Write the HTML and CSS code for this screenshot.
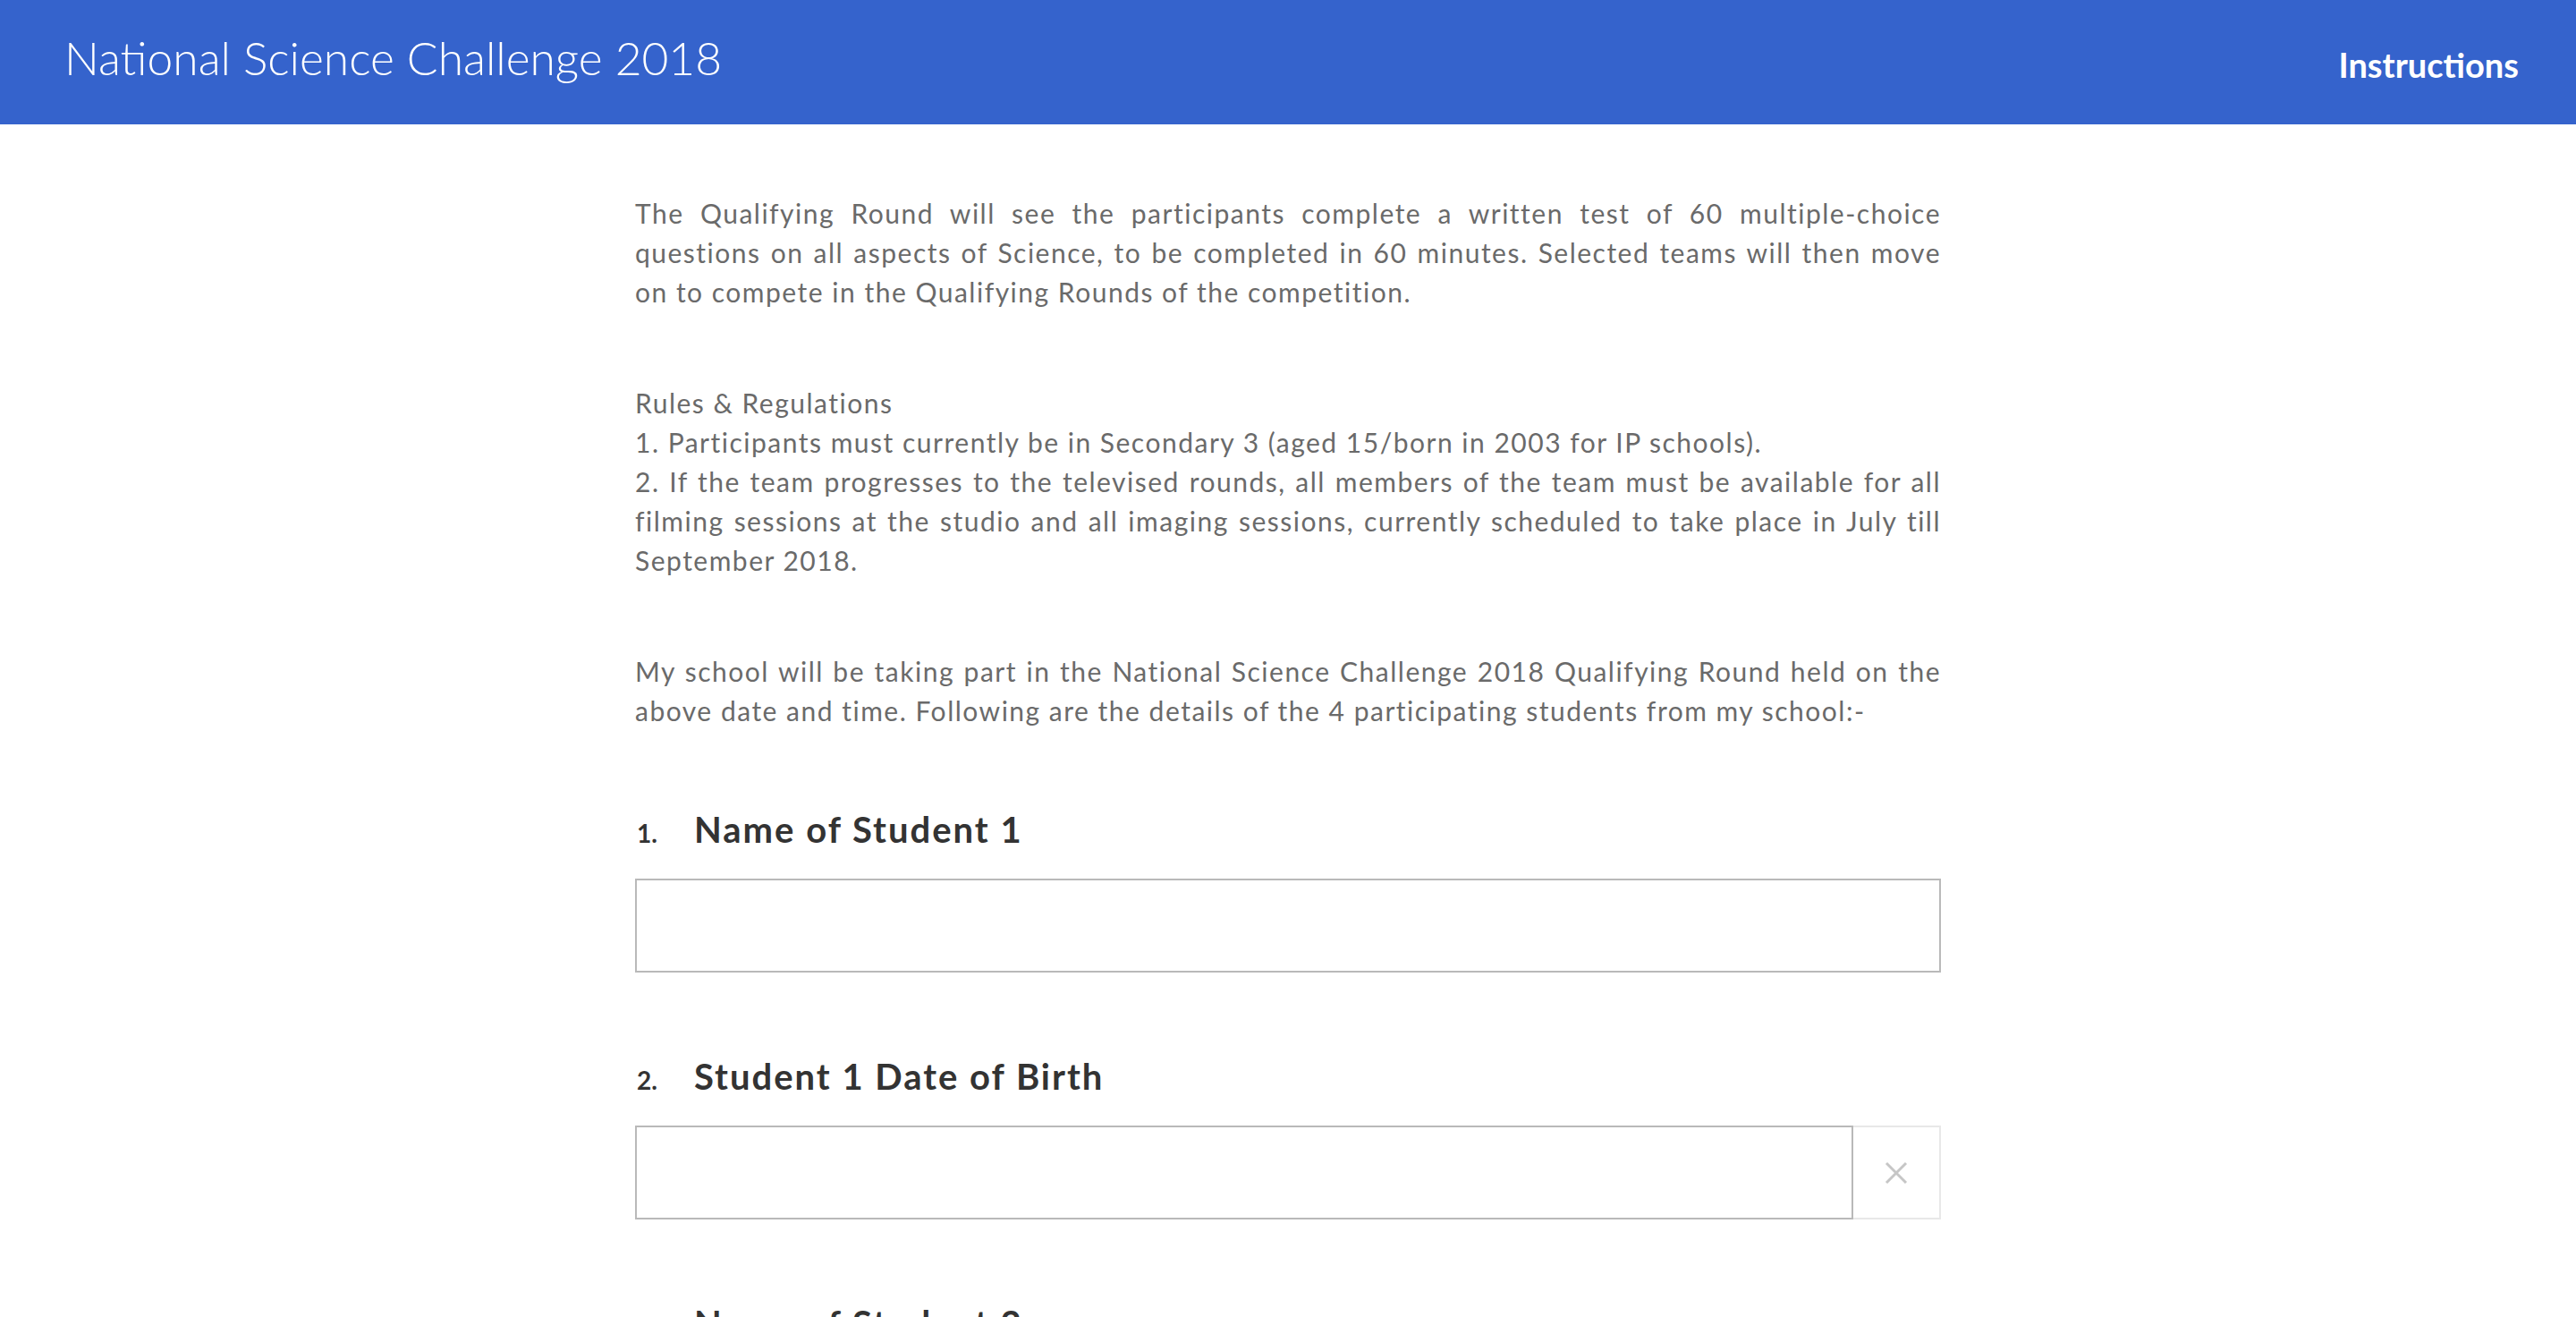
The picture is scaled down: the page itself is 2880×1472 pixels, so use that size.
FILE: index.html
```html
<!DOCTYPE html>
<html lang="en">
<head>
<meta charset="utf-8">
<title>National Science Challenge 2018</title>
<link rel="stylesheet" href="styles.css">
</head>
<body>
<header class="topbar">
  <div class="brand">National Science Challenge 2018</div>
  <a class="nav-link" href="#">Instructions</a>
</header>
<main class="content">
  <p class="intro">The Qualifying Round will see the participants complete a written test of 60 multiple-choice questions on all aspects of Science, to be completed in 60 minutes. Selected teams will then move on to compete in the Qualifying Rounds of the competition.</p>
  <p class="intro">Rules &amp; Regulations<br>1. Participants must currently be in Secondary 3 (aged 15/born in 2003 for IP schools).<br>2. If the team progresses to the televised rounds, all members of the team must be available for all filming sessions at the studio and all imaging sessions, currently scheduled to take place in July till September 2018.</p>
  <p class="intro">My school will be taking part in the National Science Challenge 2018 Qualifying Round held on the above date and time. Following are the details of the 4 participating students from my school:-</p>

  <section class="question">
    <h2 class="q-title"><span class="q-num">1.</span><span class="q-text">Name of Student 1</span></h2>
    <input class="field" type="text">
  </section>

  <section class="question">
    <h2 class="q-title"><span class="q-num">2.</span><span class="q-text">Student 1 Date of Birth</span></h2>
    <div class="date-group">
      <input class="field field-date" type="text">
      <button class="clear-btn" type="button" aria-label="Clear">
        <svg width="26" height="26" viewBox="0 0 26 26"><path d="M2 2 L24 24 M24 2 L2 24" stroke="#c6c6c6" stroke-width="3" fill="none"/></svg>
      </button>
    </div>
  </section>

  <section class="question">
    <h2 class="q-title"><span class="q-num">3.</span><span class="q-text">Name of Student 2</span></h2>
    <input class="field" type="text">
  </section>
</main>
</body>
</html>
```

FILE: styles.css
```css
html, body {
  margin: 0;
  padding: 0;
  background: #ffffff;
}
body {
  font-family: "Lato", "Open Sans", sans-serif;
}
.topbar {
  height: 139px;
  background: #3563cc;
  display: flex;
  align-items: center;
  justify-content: space-between;
  padding: 0 64px 0 72px;
  box-sizing: border-box;
}
.brand {
  color: #ffffff;
  font-weight: 300;
  font-size: 51.5px;
  margin-top: -12px;
}
.nav-link {
  color: #ffffff;
  font-weight: 700;
  font-size: 38px;
  text-decoration: none;
  margin-top: 4px;
}
.content {
  width: 1460px;
  margin: 0 auto;
  padding-top: 77px;
}
.intro {
  margin: 0 0 80px 0;
  font-size: 30px;
  line-height: 44px;
  letter-spacing: 1.5px;
  color: #6a6a6a;
  text-align: justify;
}
.question {
  margin-bottom: 92px;
}
.q-title {
  margin: 0 0 27px 0;
  display: flex;
  align-items: baseline;
  color: #333333;
  font-weight: 700;
  font-size: 40px;
  line-height: 48px;
  letter-spacing: 2px;
}
.q-num {
  width: 64px;
  font-size: 28px;
  letter-spacing: 0;
  padding-left: 2px;
}
.question:first-of-type {
  margin-top: 87px;
}
.field {
  display: block;
  width: 100%;
  height: 105px;
  box-sizing: border-box;
  border: 2px solid #b9b9b9;
  border-radius: 0;
  background: #fff;
  margin: 0;
  font-size: 30px;
  padding: 0 20px;
}
.date-group {
  display: flex;
}
.field-date {
  flex: 1;
  width: auto;
}
.clear-btn {
  width: 98px;
  height: 105px;
  border: 2px solid #e8e8e8;
  border-left: none;
  background: #fff;
  display: flex;
  align-items: center;
  justify-content: center;
  padding: 0;
  margin: 0;
}
```
